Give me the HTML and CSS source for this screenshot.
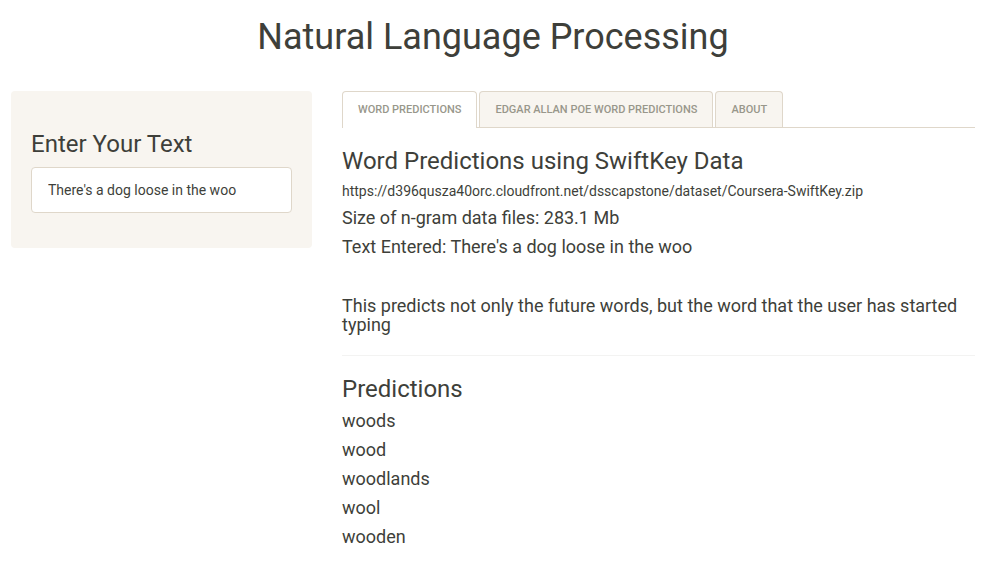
FILE: index.html
```html
<!DOCTYPE html>
<html lang="en">
<head>
<meta charset="utf-8">
<title>Natural Language Processing</title>
<link rel="stylesheet" href="styles.css">
</head>
<body>
<h1>Natural Language Processing</h1>
<div class="layout">
  <form class="sidebar">
    <label class="heading" for="entry">Enter Your Text</label>
    <input class="entry" id="entry" type="text" value="There's a dog loose in the woo">
  </form>
  <main class="content">
    <nav class="tabs">
      <a class="tab active" href="#words">Word Predictions</a>
      <a class="tab" href="#poe">Edgar Allan Poe Word Predictions</a>
      <a class="tab" href="#about">About</a>
    </nav>
    <section id="words">
      <h3 class="heading">Word Predictions using SwiftKey Data</h3>
      <div class="source">https://d396qusza40orc.cloudfront.net/dsscapstone/dataset/Coursera-SwiftKey.zip</div>
      <h4>Size of n-gram data files: 283.1 Mb</h4>
      <h4>Text Entered: There's a dog loose in the woo</h4>
      <h4 class="note">This predicts not only the future words, but the word that the user has started typing</h4>
      <hr>
      <h3 class="heading">Predictions</h3>
      <h4>woods</h4>
      <h4>wood</h4>
      <h4>woodlands</h4>
      <h4>wool</h4>
      <h4>wooden</h4>
    </section>
  </main>
</div>
</body>
</html>
```

FILE: styles.css
```css
* { box-sizing: border-box; }
body {
  margin: 0;
  padding: 0 14px 0 11px;
  font-family: Roboto, "Liberation Sans", sans-serif;
  font-size: 14px;
  line-height: 20px;
  color: #3e3f3a;
  background: #fff;
}
h1, h3, h4 { font-weight: 400; }
h1 {
  margin: 17px 0 33px;
  font-size: 36px;
  line-height: 41px;
  text-align: center;
}
.layout {
  display: grid;
  grid-template-columns: 301fr 633fr;
  column-gap: 30px;
  align-items: start;
}
.sidebar {
  padding: 40px 20px 35px;
  background: #f8f5f0;
  border-radius: 4px;
}
.heading {
  display: block;
  margin: 20px 0 8px;
  font-size: 24px;
  line-height: 27px;
}
.sidebar .heading { margin: 0 0 9px; }
.entry {
  display: block;
  width: 100%;
  height: 46px;
  padding: 12px 16px;
  border: 1px solid #dfd7ca;
  border-radius: 4px;
  background: #fff;
  color: #3e3f3a;
  font: inherit;
}
.tabs {
  display: flex;
  gap: 2px;
  border-bottom: 1px solid #dfd7ca;
}
.tab {
  height: 36px;
  padding: 8px 15px;
  border: 1px solid #dfd7ca;
  border-bottom: 0;
  border-radius: 4px 4px 0 0;
  background: #f8f5f0;
  color: #98978b;
  font-size: 11px;
  font-weight: 500;
  line-height: 20px;
  text-transform: uppercase;
  text-decoration: none;
}
.tab.active {
  height: 37px;
  margin-bottom: -1px;
  background: #fff;
}
.source {
  margin-bottom: 9px;
  line-height: 16px;
}
h4 {
  margin: 0 0 10px;
  font-size: 18px;
  line-height: 19px;
}
.note { margin: 40px 0 21px; }
hr {
  margin: 20px 0;
  border: 0;
  border-top: 1px solid #f3f3f2;
}
```
